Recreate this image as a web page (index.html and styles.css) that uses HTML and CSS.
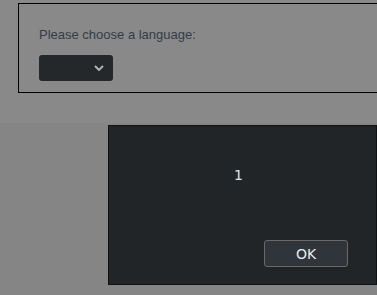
FILE: index.html
```html
<!DOCTYPE html>
<html lang="en">
<head>
    <meta charset="UTF-8">
    <title>Language</title>
    <link rel="stylesheet" href="styles.css">
</head>
<body>
    <div class="top">
        <div class="panel">
            <p class="label">Please choose a language:</p>
            <div class="select">
                <svg width="10" height="6" viewBox="0 0 10 6"><path d="M1 1 L5 5 L9 1" fill="none" stroke="#b8b8b8" stroke-width="1.8"/></svg>
            </div>
        </div>
    </div>

    <div class="dialog">
        <div class="message">1</div>
        <div class="actions">
            <button class="ok">OK</button>
        </div>
    </div>
</body>
</html>
```

FILE: styles.css
```css
body {
    margin: 0;
    background-color: #858585;
    font-family: "Liberation Sans", Arial, sans-serif;
    height: 295px;
    overflow: hidden;
}

.top {
    background-color: #898989;
    height: 123px;
    padding-top: 3px;
    box-sizing: border-box;
}

.panel {
    margin-left: 18px;
    margin-right: -10px;
    height: 90px;
    border: 1px solid #000;
    box-sizing: border-box;
    padding: 23px 0 0 20px;
}

.label {
    margin: 0;
    font-size: 13px;
    color: #333d48;
}

.select {
    margin-top: 13px;
    width: 74px;
    height: 26px;
    background-color: #25282b;
    border-radius: 3px;
    display: flex;
    align-items: center;
    justify-content: flex-end;
    padding-right: 9px;
    box-sizing: border-box;
}

.dialog {
    position: absolute;
    left: 108px;
    top: 125px;
    width: 269px;
    height: 160px;
    background-color: #222528;
    border: 1px solid #111;
    box-sizing: border-box;
    display: flex;
    flex-direction: column;
}

.message {
    margin-top: 41px;
    text-align: center;
    font-family: "DejaVu Sans", sans-serif;
    font-size: 14px;
    color: #dde6ee;
    padding-right: 8px;
}

.actions {
    margin-top: auto;
    margin-bottom: 17px;
    display: flex;
    justify-content: flex-end;
    padding-right: 28px;
}

.ok {
    width: 84px;
    height: 27px;
    background-color: #30343b;
    border: 1px solid #6f6862;
    border-radius: 3px;
    color: #e6eaee;
    font-family: "DejaVu Sans", sans-serif;
    font-size: 14px;
    padding: 0;
}
```
